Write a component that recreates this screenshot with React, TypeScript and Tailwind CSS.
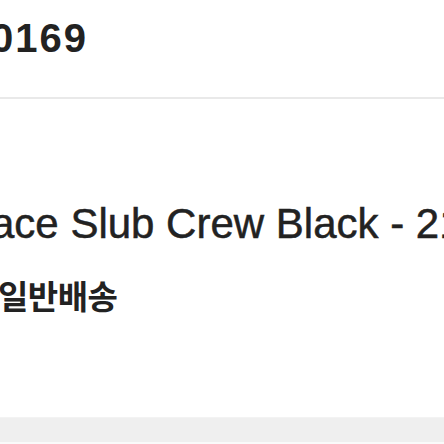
import React from "react";

export default function App() {
  return (
    <div
      className="w-[444px] h-[444px] bg-white overflow-hidden flex flex-col text-[#222222]"
      style={{ fontFamily: '"Liberation Sans", "Noto Sans CJK KR", sans-serif' }}
    >
      <div className="h-[97px] shrink-0 pt-[19px] overflow-hidden">
        <div className="ml-[-9px] text-[40px] leading-[38px] font-bold whitespace-nowrap tracking-[2px]">0169</div>
      </div>
      <div className="h-[2px] shrink-0 bg-[#e9e9e9]" />
      <div className="h-[104px] shrink-0" />
      <div className="h-[42px] shrink-0 overflow-hidden">
        <div className="ml-[-9px] text-[42px] leading-[42px] whitespace-nowrap [-webkit-text-stroke:0.5px_#222222]">ace Slub Crew Black - 21</div>
      </div>
      <div className="h-[30px] shrink-0" />
      <div className="h-[40px] shrink-0 overflow-hidden">
        <div
          className="ml-[-2px] text-[33px] leading-[40px] font-bold whitespace-nowrap tracking-[-0.5px]"
          style={{ fontFamily: '"Noto Sans CJK KR", sans-serif' }}
        >
          일반배송
        </div>
      </div>
      <div className="h-[102px] shrink-0" />
      <div className="h-[25px] shrink-0 bg-[#efefef] border-t border-[#f3f3f3]" />
      <div className="h-[2px] shrink-0 bg-[#fafafa]" />
    </div>
  );
}
